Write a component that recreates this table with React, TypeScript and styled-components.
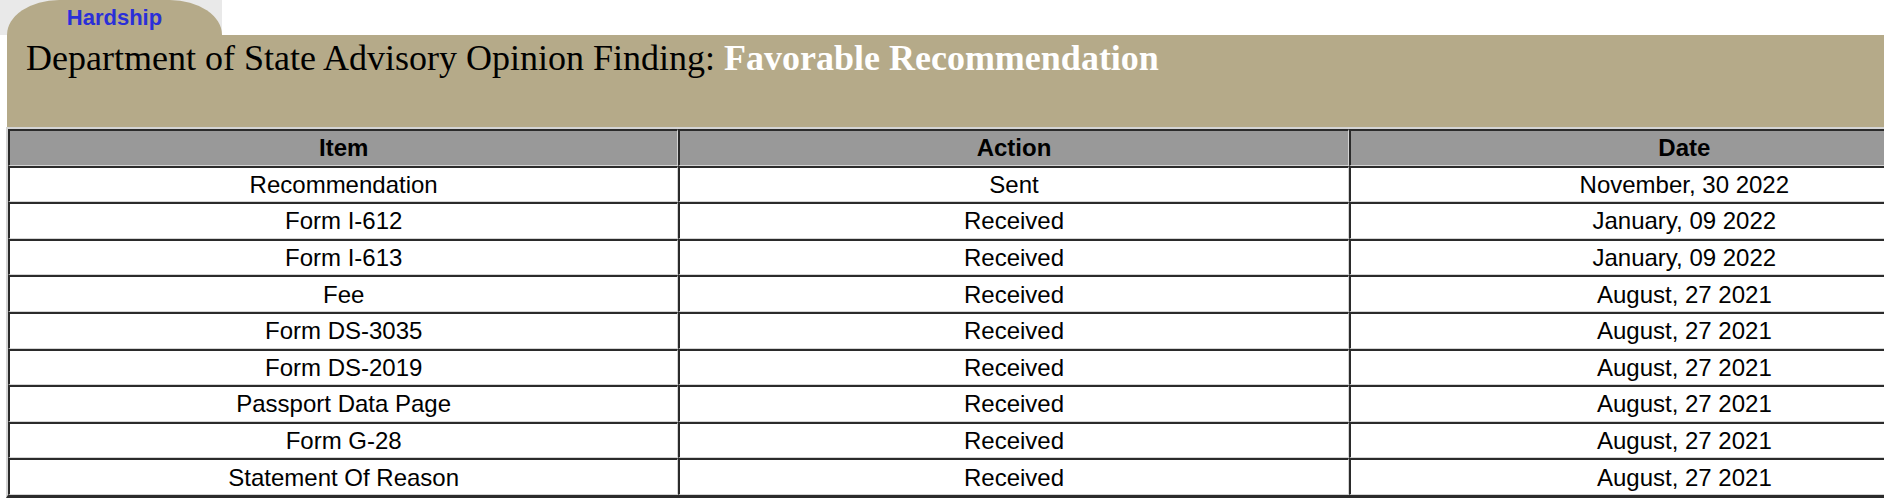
import React from "react";
import styled, { createGlobalStyle } from "styled-components";

const GlobalStyle = createGlobalStyle`
  html, body {
    margin: 0;
    padding: 0;
    background: #ffffff;
    overflow: hidden;
  }
  body {
    font-family: "Liberation Sans", Arial, sans-serif;
    color: #000;
  }
`;

const TAN = "#b5aa89";
const LIGHT = "#d4d4d4";
const DARK = "#2b2b2b";

const Page = styled.div`
  width: 2030px;
  display: flex;
  flex-direction: column;
`;

const TabStrip = styled.div`
  width: 222px;
  height: 35px;
  background: #e9e9e9;
  display: flex;
  align-items: flex-end;
`;

const Tab = styled.div`
  margin-left: 7px;
  width: 215px;
  height: 35px;
  background: ${TAN};
  border-radius: 52px 52px 0 0 / 35px 35px 0 0;
  box-sizing: border-box;
  padding-top: 5px;
  text-align: center;
  font-family: "Liberation Sans", Arial, sans-serif;
  font-weight: bold;
  font-size: 22px;
  line-height: 25px;
  color: #2a2fd8;
`;

const Banner = styled.div`
  margin-left: 7px;
  height: 92px;
  background: ${TAN};
  box-sizing: border-box;
  padding: 3px 0 0 19px;
`;

const Heading = styled.h2`
  margin: 0;
  font-family: "Liberation Serif", "Times New Roman", serif;
  font-weight: normal;
  font-size: 36px;
  line-height: 41px;
  color: #000;
`;

const Finding = styled.span`
  font-weight: bold;
  color: #ffffff;
`;

const Table = styled.table`
  margin-left: 6px;
  border-collapse: separate;
  border-spacing: 0;
  border-style: solid;
  border-width: 2px 3px 3px 2px;
  border-color: ${LIGHT} ${DARK} ${DARK} ${LIGHT};
  table-layout: fixed;
  width: 2016px;
`;

const Cell = styled.td<{ $head?: boolean }>`
  border-style: solid;
  border-width: 2px 1px 1px 2px;
  border-color: ${DARK} ${LIGHT} ${LIGHT} ${DARK};
  background: ${(p) => (p.$head ? "#999999" : "#ffffff")};
  font-weight: ${(p) => (p.$head ? "bold" : "normal")};
  font-family: "Liberation Sans", Arial, sans-serif;
  font-size: 24px;
  height: 33.6px;
  padding: 0;
  text-align: center;
  vertical-align: middle;
  line-height: 27px;
  color: #000;
`;

const rows: [string, string, string][] = [
  ["Recommendation", "Sent", "November, 30 2022"],
  ["Form I-612", "Received", "January, 09 2022"],
  ["Form I-613", "Received", "January, 09 2022"],
  ["Fee", "Received", "August, 27 2021"],
  ["Form DS-3035", "Received", "August, 27 2021"],
  ["Form DS-2019", "Received", "August, 27 2021"],
  ["Passport Data Page", "Received", "August, 27 2021"],
  ["Form G-28", "Received", "August, 27 2021"],
  ["Statement Of Reason", "Received", "August, 27 2021"],
];

export default function App() {
  return (
    <>
      <GlobalStyle />
      <Page>
        <TabStrip>
          <Tab>Hardship</Tab>
        </TabStrip>
        <Banner>
          <Heading>
            Department of State Advisory Opinion Finding:{" "}
            <Finding>Favorable Recommendation</Finding>
          </Heading>
        </Banner>
        <Table>
          <thead>
            <tr>
              <Cell as="th" $head>Item</Cell>
              <Cell as="th" $head>Action</Cell>
              <Cell as="th" $head>Date</Cell>
            </tr>
          </thead>
          <tbody>
            {rows.map((r) => (
              <tr key={r[0]}>
                <Cell>{r[0]}</Cell>
                <Cell>{r[1]}</Cell>
                <Cell>{r[2]}</Cell>
              </tr>
            ))}
          </tbody>
        </Table>
      </Page>
    </>
  );
}
